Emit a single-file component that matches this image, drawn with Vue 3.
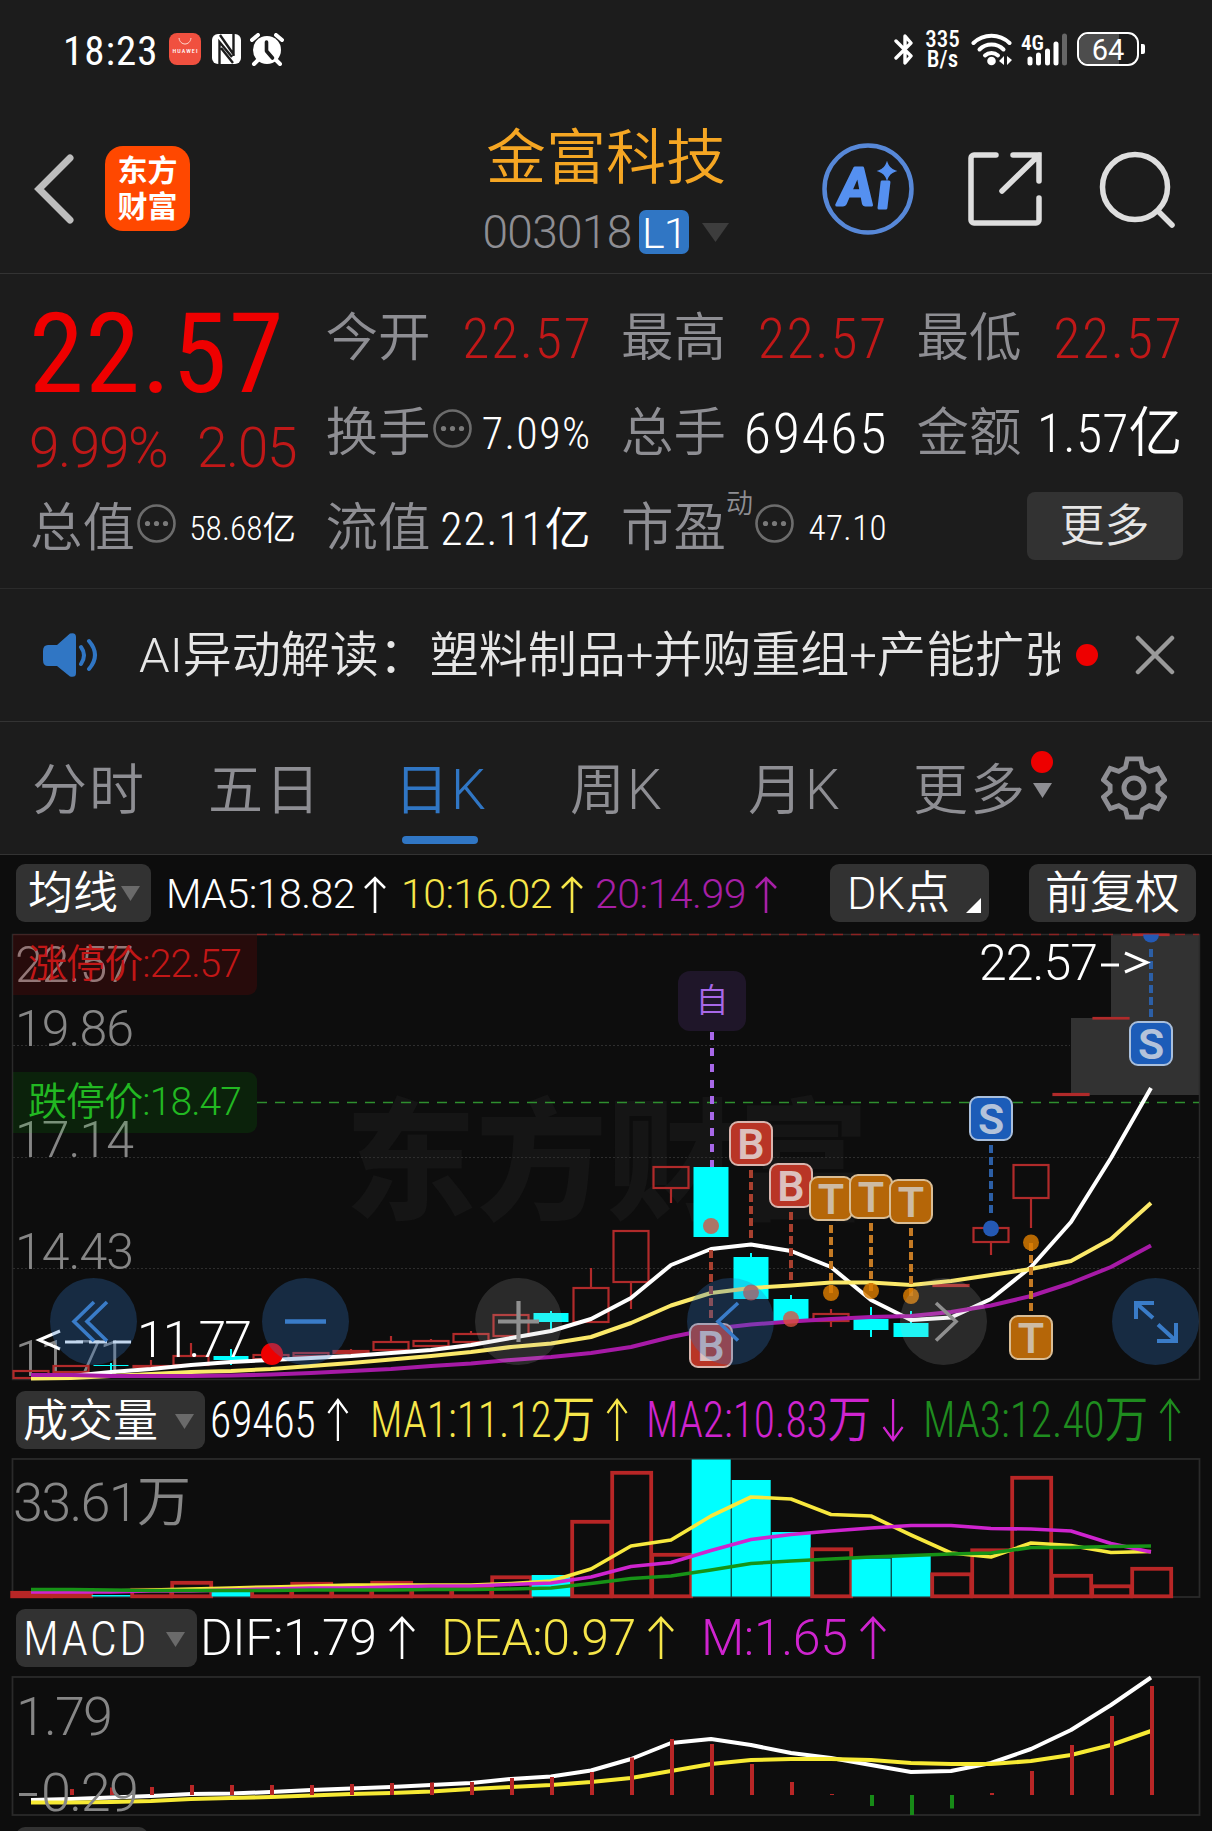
<template>
  <div class="page">
    <!-- Status bar -->
    <div class="status-bar">
      <span class="clock">18:23</span>
      <svg class="huawei" width="32" height="32" viewBox="0 0 32 32">
        <rect width="32" height="32" rx="8" fill="#f0503f" />
        <path d="M10 5c1 8 11 8 12 0" fill="none" stroke="#ffd9cf" stroke-width="1" />
        <text x="3.5" y="20" textLength="25" class="huawei-text">HUAWEI</text>
      </svg>
      <svg class="nfc" width="29" height="30" viewBox="0 0 29 30">
        <rect width="29" height="30" rx="6" fill="#fff" />
        <path d="M7.5 30V8L20 23M8 1l14 20M21.5 0v22M9 14l12 15" fill="none" stroke="#1c1c1c" stroke-width="2.4" />
      </svg>
      <svg class="alarm" width="34" height="33" viewBox="0 0 34 33">
        <circle cx="17" cy="17" r="14" fill="#fff" />
        <path d="M2 7l6-5M32 7l-6-5M8 27l-4 4M26 27l4 4" stroke="#fff" stroke-width="4" stroke-linecap="round" />
        <path d="M16.5 9v9l6 7" fill="none" stroke="#1c1c1c" stroke-width="3.6" stroke-linecap="round" stroke-linejoin="round" />
      </svg>
      <span class="spacer" />
      <svg class="bluetooth" width="21" height="33" viewBox="0 0 21 33">
        <path d="M2 8l15 15-6 7V3l6 7L2 25" fill="none" stroke="#fff" stroke-width="3.4" stroke-linejoin="round" stroke-linecap="round" />
      </svg>
      <span class="net-speed"><span>335</span><span>B/s</span></span>
      <svg class="wifi" width="42" height="33" viewBox="0 0 42 33">
        <g fill="none" stroke="#fff" stroke-width="4" stroke-linecap="round">
          <path d="M2.5 10a26 26 0 0 1 36 0" />
          <path d="M8.500 16.500a17 17 0 0 1 24 0" />
          <path d="M14 22.500a9.500 9.500 0 0 1 13 0" />
        </g>
        <circle cx="20.500" cy="28" r="4.300" fill="#fff" />
        <path d="M33 23v9l-5-4zM36 32v-9l5 4z" fill="#fff" />
      </svg>
      <svg class="signal" width="47" height="33" viewBox="0 0 47 33">
        <text x="0" y="17" textLength="23" lengthAdjust="spacingAndGlyphs" class="signal-text">4G</text>
        <g stroke="#fff" stroke-width="5" stroke-linecap="round">
          <path d="M9 26v4M17.500 22v8M26.500 18v12M35 11v19" />
          <path d="M43.500 3v27" stroke="#666" />
        </g>
      </svg>
      <span class="battery"><span class="battery-level" />
        <span class="battery-text">64</span>
      </span>
      <span class="battery-nub" />
    </div>

    <!-- Header -->
    <header class="header">
      <div class="header-left">
        <svg width="40" height="70" viewBox="0 0 40 70">
          <path d="M36 4L5 35l31 31" fill="none" stroke="#bdbdbd" stroke-width="7" stroke-linecap="round" />
        </svg>
        <div class="logo"><span>东方</span><span>财富</span></div>
      </div>
      <div class="header-title">
        <h1>金富科技</h1>
        <div class="code">
          <span>003018</span>
          <span class="level">L1</span>
          <svg width="27" height="19" viewBox="0 0 27 19"><path d="M0 0h27L13.500 19z" fill="#3d3d3d" /></svg>
        </div>
      </div>
      <div class="header-right">
        <svg width="92" height="92" viewBox="0 0 92 92">
          <circle cx="46" cy="46" r="43.500" fill="none" stroke="#5788d8" stroke-width="4.500" />
          <text x="17" y="62" class="ai-text">A</text>
          <text x="56" y="65" class="ai-text ai-i">ı</text>
          <path d="M65 20q2 6 8 8-6 2-8 8-2-6-8-8 6-2 8-8z" fill="#5590f0" stroke="#5590f0" stroke-width="1.500" />
        </svg>
        <svg class="share" width="74" height="74" viewBox="0 0 74 74">
          <path d="M28 3H6a3 3 0 0 0-3 3v62a3 3 0 0 0 3 3h62a3 3 0 0 0 3-3V46M45 3h26v26M71 3L34 39" fill="none" stroke="#dedede" stroke-width="5.500" stroke-linecap="round" />
        </svg>
        <svg class="search" width="76" height="78" viewBox="0 0 76 78">
          <circle cx="36" cy="37" r="32.500" fill="none" stroke="#dedede" stroke-width="5.500" />
          <path d="M59 61l14 14" stroke="#dedede" stroke-width="5.500" stroke-linecap="round" />
        </svg>
      </div>
    </header>

    <!-- Quote -->
    <section class="quote">
      <div class="price-box">
        <div class="price">22.57</div>
        <div class="change"><span>9.99%</span><span>2.05</span></div>
      </div>
      <div v-for="q in quotes" :key="q.label" class="quote-item">
        <span class="label">{{ q.label }}</span>
        <sup v-if="q.sup" class="sup">{{ q.sup }}</sup>
        <svg v-if="q.info" class="info" width="39" height="39" viewBox="0 0 39 39">
          <circle cx="19.500" cy="19.500" r="18" fill="none" stroke="#6c6c6c" stroke-width="2.600" />
          <g fill="#7a7a7a"><circle cx="10.500" cy="19.500" r="2.600" /><circle cx="19.500" cy="19.500" r="2.600" /><circle cx="28.500" cy="19.500" r="2.600" /></g>
        </svg>
        <span class="value" :class="q.cls">{{ q.value }}</span>
      </div>
      <button class="more-btn">更多</button>
    </section>

    <!-- News -->
    <section class="news">
      <svg class="speaker" width="56" height="46" viewBox="0 0 56 46">
        <path d="M5 13h9L27 1.500Q33 0 33 5v36q0 5-6 3.500L14 34H5q-5 0-5-6V19q0-6 5-6z" fill="#3076c4" />
        <path d="M38 15q6 8 0 17M46 9q12 14 0 28" fill="none" stroke="#3076c4" stroke-width="4" stroke-linecap="round" />
      </svg>
      <div class="news-text">AI异动解读： 塑料制品+并购重组+产能扩张</div>
      <span class="red-dot" />
      <svg class="close" width="40" height="40" viewBox="0 0 40 40">
        <path d="M3 3l34 34M37 3L3 37" stroke="#9a9a9a" stroke-width="4.500" stroke-linecap="round" />
      </svg>
    </section>

    <!-- Tabs -->
    <nav class="tabs">
      <span v-for="t in tabs" :key="t" class="tab" :class="{ active: t === '日K' }">{{ t }}</span>
      <span class="tab tab-more">更多
        <svg width="19" height="15" viewBox="0 0 19 15"><path d="M0 0h19L9.500 15z" fill="#8e8e93" /></svg>
        <span class="red-dot badge" />
      </span>
      <svg class="gear" width="66" height="66" viewBox="0 0 66 66">
        <path d="M26 3h14l2 9 7 4 9-3 7 12-7 6v6l7 6-7 12-9-3-7 4-2 8H26l-2-8-7-4-9 3-7-12 7-6v-6l-7-6 7-12 9 3 7-4z" transform="translate(1.500 1) scale(.955)" fill="none" stroke="#8e8e93" stroke-width="5" />
        <circle cx="33" cy="33" r="10" fill="none" stroke="#8e8e93" stroke-width="5" />
      </svg>
    </nav>

    <div class="charts">
      <!-- K line -->
      <div class="bar ma-bar">
        <button class="chip ma-chip">均线<svg width="19" height="15" viewBox="0 0 19 15"><path d="M0 0h19L9.500 15z" fill="#6a6a6a" /></svg></button>
        <span v-for="r in maReadouts" :key="r.text" class="readout" :class="r.cls">{{ r.text }}
          <svg class="arrow" viewBox="0 0 22 38"><path d="M11 37V2M1 12L11 2l10 10" /></svg>
        </span>
        <button class="chip dk-chip">DK点<svg width="15" height="15" viewBox="0 0 15 15"><path d="M15 0v15H0z" fill="#fff" /></svg></button>
        <button class="chip fq-chip">前复权</button>
      </div>

      <svg class="chart k-chart" viewBox="0 928 1212 458">
        <text x="345" y="1209" textLength="524" class="watermark">东方财富</text>
        <rect x="1111" y="934" width="88" height="84" fill="#323232" />
        <rect x="1071" y="1018" width="128" height="77" fill="#323232" />
        <g stroke="#2e2e2e" stroke-width="1" stroke-dasharray="2 2">
          <path d="M13 1045.500H1070M13 1157.500H1199M13 1268.500H1199" />
        </g>
        <rect x="12.500" y="934.500" width="1187" height="445" fill="none" stroke="#2a2a2a" stroke-width="1.500" />

        <g class="axis">
          <text x="15" y="982" textLength="119">22.57</text>
          <text x="15" y="1046" textLength="119">19.86</text>
          <text x="15" y="1157" textLength="119">17.14</text>
          <text x="15" y="1269" textLength="119">14.43</text>
          <text x="15" y="1376" textLength="112">11.71</text>
        </g>
        <path d="M13 934h244v52a9 9 0 0 1-9 9H13z" fill="#f00" fill-opacity=".11" />
        <path d="M13 1072h235a9 9 0 0 1 9 9v43a9 9 0 0 1-9 9H13z" fill="#0f0" fill-opacity=".09" />
        <text x="28" y="977" textLength="214" class="limit" fill="#c31717">涨停价:22.57</text>
        <text x="28" y="1115" textLength="214" class="limit" fill="#22b822">跌停价:18.47</text>
        <path d="M257 934.500H1199" stroke="#8c2222" stroke-width="1.300" stroke-dasharray="10 8" />
        <path d="M257 1102.500H1199" stroke="#2f8f2f" stroke-width="1.300" stroke-dasharray="10 8" />

        <g v-for="(c, i) in candles" :key="i">
          <template v-if="c.up">
            <path :d="wicks(c, i)" stroke="#b02a2a" stroke-width="2.200" />
            <rect :x="cx(i) - 17.500" :y="c.top" width="35" :height="c.bottom - c.top" fill="none" stroke="#b02a2a" stroke-width="2.200" />
          </template>
          <template v-else>
            <path :d="`M${cx(i)} ${c.high}V${c.low}`" stroke="#00ffff" stroke-width="2" />
            <rect :x="cx(i) - 17.500" :y="c.top" width="35" :height="c.bottom - c.top" fill="#00ffff" />
          </template>
        </g>

        <g fill="none" stroke-width="4" stroke-linejoin="round">
          <polyline :points="line(ma5, 1)" stroke="#fff" />
          <polyline :points="line(ma10)" stroke="#fbe96a" />
          <polyline :points="line(ma20)" stroke="#a61aa6" />
        </g>

        <rect x="678" y="971" width="68" height="60" rx="12" fill="#1f1629" />
        <text x="712" y="1012" class="self-mark">自</text>
        <path d="M712 1032V1167" stroke="#a868e8" stroke-width="4" stroke-dasharray="8 8" />

        <g v-for="(m, i) in marks" :key="'m' + i" :class="'mark-' + m.type">
          <path :d="`M${m.x} ${m.from}V${m.to}`" class="mark-line" />
          <circle v-if="m.dot > 940" :cx="m.x" :cy="m.dot" r="8" class="mark-dot" />
          <path v-else :d="`M${m.x - 8} 934.500a8 8 0 0 0 16 0z`" class="mark-dot" />
          <rect :x="m.x - 21" :y="m.y - 21.500" width="42" height="43" rx="8" class="mark-box" />
          <text :x="m.x" :y="m.y + 15" class="mark-text">{{ m.type }}</text>
        </g>

        <text x="979" y="980" textLength="119" class="extreme">22.57</text>
        <path d="M1101 965h18M1125 953l22 9.500-22 9.500" class="extreme-arrow" />
        <text x="137" y="1357" textLength="115" class="extreme">11.77</text>
        <path d="M60 1331l-21 9 21 9M65 1342h18M89 1342h18M113 1342h18" class="extreme-arrow" />
        <circle cx="272" cy="1354" r="11" fill="#ee0000" />

        <circle v-for="b in tools" :key="b.x" :cx="b.x" cy="1321.500" r="43.500" :class="b.gray ? 'tool-gray' : 'tool-blue'" />
        <g fill="none" stroke="#3a7cc8" stroke-width="3.600">
          <path d="M94 1302l-20 19.500 20 19.500M107 1302l-20 19.500 20 19.500" />
          <path d="M285 1321.500h41" stroke-width="4.500" />
          <path d="M738 1303l-20 18.500 20 19" />
          <path d="M1154 1303h-18v16M1136 1303l17 15M1157 1341h19v-18M1176 1341l-18-16.500" stroke-width="4" />
        </g>
        <g fill="none" stroke="#8f8f8f" stroke-width="3.600">
          <path d="M498 1321.500h41M518.500 1301v41" stroke-width="4.200" />
          <path d="M936 1303l20 18.500-20 19" />
        </g>
      </svg>

      <!-- Volume -->
      <div class="bar vol-bar">
        <button class="chip vol-chip">成交量<svg width="19" height="15" viewBox="0 0 19 15"><path d="M0 0h19L9.500 15z" fill="#6a6a6a" /></svg></button>
        <span v-for="r in volReadouts" :key="r.text" class="readout" :class="r.cls">{{ r.text }}
          <svg class="arrow" :class="{ down: r.down }" viewBox="0 0 24 44"><path d="M12 43V2M1 15L12 2l11 13" /></svg>
        </span>
      </div>

      <svg class="chart vol-chart" viewBox="0 1454 1212 150">
        <rect x="12.500" y="1459" width="1187" height="138" fill="none" stroke="#2a2a2a" stroke-width="1.800" />
        <text x="13" y="1521" textLength="178" class="axis-big">33.61万</text>
        <template v-for="(v, i) in volumes" :key="i">
          <rect v-if="candles[i].up" :x="cx(i) - 18.800" :y="v + 1.800" width="39" :height="1594.500 - v" fill="none" stroke="#b82626" stroke-width="3.800" />
          <rect v-else :x="cx(i) - 19.300" :y="v" width="39" :height="1596.500 - v" fill="#00ffff" />
        </template>
        <g fill="none" stroke-width="3.600" stroke-linejoin="round">
          <polyline :points="line(vol5)" stroke="#f7e83e" />
          <polyline :points="line(vol10)" stroke="#cf24cf" />
          <polyline :points="line(vol20)" stroke="#179317" />
        </g>
      </svg>

      <!-- MACD -->
      <div class="bar macd-bar">
        <button class="chip macd-chip">MACD<svg width="19" height="15" viewBox="0 0 19 15"><path d="M0 0h19L9.500 15z" fill="#6a6a6a" /></svg></button>
        <span v-for="r in macdReadouts" :key="r.text" class="readout" :class="r.cls">{{ r.text }}
          <svg class="arrow" viewBox="0 0 26 44"><path d="M13 43V2M1 15L13 2l12 13" /></svg>
        </span>
      </div>

      <svg class="chart macd-chart" viewBox="0 1672 1212 150">
        <rect x="12.500" y="1677" width="1187" height="138" fill="none" stroke="#2a2a2a" stroke-width="1.800" />
        <text x="16" y="1735" textLength="97" class="axis-big">1.79</text>
        <g fill="none" stroke-width="4" stroke-linejoin="round">
          <polyline :points="line(dif)" stroke="#fff" />
          <polyline :points="line(dea)" stroke="#f7ea34" />
        </g>
        <path v-for="(h, i) in hist" :key="i" :d="`M${cx(i) + 1} 1795V${h}`" :stroke="h > 1795 ? '#178a17' : '#b82626'" stroke-width="4" />
        <path d="M19 1794.500h18" stroke="#868686" stroke-width="3" />
        <text x="41" y="1811" textLength="98" class="axis-big">0.29</text>
      </svg>
      <div class="next-chip" />
    </div>
  </div>
</template>

<script setup>
const quotes = [
  { label: '今开', value: '22.57', cls: 'red' },
  { label: '最高', value: '22.57', cls: 'red' },
  { label: '最低', value: '22.57', cls: 'red' },
  { label: '换手', value: '7.09%', cls: 'size-43', info: true },
  { label: '总手', value: '69465', cls: 'size-56' },
  { label: '金额', value: '1.57亿', cls: 'size-54' },
  { label: '总值', value: '58.68亿', cls: 'size-34', info: true },
  { label: '流值', value: '22.11亿', cls: 'size-46' },
  { label: '市盈', value: '47.10', cls: 'size-35', info: true, sup: '动' }
]

const tabs = ['分时', '五日', '日K', '周K', '月K']

const maReadouts = [
  { text: 'MA5:18.82', cls: 'white' },
  { text: '10:16.02', cls: 'yellow' },
  { text: '20:14.99', cls: 'purple' }
]
const volReadouts = [
  { text: '69465', cls: 'white' },
  { text: 'MA1:11.12万', cls: 'yellow' },
  { text: 'MA2:10.83万', cls: 'magenta', down: true },
  { text: 'MA3:12.40万', cls: 'green' }
]
const macdReadouts = [
  { text: 'DIF:1.79', cls: 'white' },
  { text: 'DEA:0.97', cls: 'yellow' },
  { text: 'M:1.65', cls: 'magenta' }
]

// [up, top, bottom, high, low]
const candles = [
  [1, 1371, 1378, 1371, 1378],
  [1, 1366, 1372, 1366, 1372],
  [0, 1365, 1366, 1363, 1372],
  [1, 1366, 1367, 1360, 1367],
  [1, 1356, 1365, 1343, 1365],
  [0, 1356, 1360, 1349, 1365],
  [1, 1355, 1359, 1355, 1359],
  [1, 1353, 1356, 1352, 1356],
  [1, 1351, 1353, 1349, 1353],
  [1, 1342, 1350, 1336, 1350],
  [1, 1341, 1346, 1339, 1346],
  [1, 1334, 1342, 1331, 1342],
  [1, 1315, 1336, 1315, 1336],
  [0, 1313, 1322, 1311, 1332],
  [1, 1288, 1322, 1268, 1322],
  [1, 1231, 1282, 1231, 1309],
  [1, 1167, 1188, 1167, 1203],
  [0, 1167, 1237, 1167, 1237],
  [0, 1257, 1299, 1253, 1299],
  [0, 1299, 1321, 1295, 1321],
  [1, 1314, 1321, 1309, 1327],
  [0, 1319, 1330, 1307, 1337],
  [0, 1323, 1337, 1311, 1337],
  [1, 1285, 1286, 1285, 1286],
  [1, 1228, 1242, 1228, 1255],
  [1, 1165, 1198, 1165, 1228],
  [1, 1094, 1095, 1094, 1095],
  [1, 1018, 1018.5, 1018, 1018.5],
  [1, 934.5, 935, 934.5, 935]
].map(([up, top, bottom, high, low]) => ({ up, top, bottom, high, low }))

const ma5 = [1376, 1372, 1369, 1365, 1362, 1360, 1358, 1356, 1353, 1350, 1345, 1338, 1331, 1319, 1298, 1265, 1249, 1244.5, 1251, 1267, 1300, 1320, 1317.5, 1299, 1267, 1222, 1158, 1088]
const ma10 = [1378.5, 1378, 1376, 1374, 1372, 1371, 1369, 1366, 1363, 1359.5, 1356, 1352, 1347, 1343.5, 1337, 1323, 1305.5, 1293, 1288, 1285.5, 1282.5, 1282.5, 1285, 1281, 1275, 1269, 1261, 1239, 1203]
const ma20 = [1375, 1375, 1376, 1376, 1376, 1375.5, 1374.5, 1373, 1371, 1369, 1366, 1363.5, 1360, 1357, 1353, 1347, 1337, 1329, 1324.5, 1321.5, 1319, 1317, 1316, 1312, 1305.5, 1296, 1283, 1267, 1245.5]

const volumes = [1591, 1593, 1595, 1588, 1581, 1591, 1588, 1582, 1587, 1581, 1587, 1587, 1575.5, 1575, 1520, 1471, 1553, 1459.5, 1480, 1532, 1547.5, 1558.5, 1556, 1572.5, 1548.5, 1476, 1574, 1584.5, 1567]
const vol5 = [1590, 1591, 1591, 1590, 1589, 1588, 1587, 1586, 1585, 1585, 1585, 1585, 1583.5, 1581, 1569, 1546, 1540, 1516, 1497, 1499, 1514.5, 1516, 1535, 1553, 1557, 1543, 1545.5, 1552.5, 1551.5]
const vol10 = [1592, 1592, 1592, 1591, 1591, 1590, 1589, 1588, 1588, 1587, 1586, 1586, 1584.5, 1583, 1577, 1566.5, 1562.5, 1550.5, 1539.5, 1534.5, 1531, 1528, 1525.5, 1525.5, 1528.5, 1529, 1531, 1543.5, 1552]
const vol20 = [1589.5, 1589.5, 1590, 1590.5, 1590.5, 1590.5, 1590.5, 1590, 1590, 1590, 1589.5, 1589.5, 1589, 1588, 1583.5, 1578.5, 1576, 1570, 1563.5, 1561, 1559, 1557, 1555.5, 1554, 1553, 1547.5, 1547.5, 1546.5, 1546]

const dif = [1800, 1799, 1797.5, 1796, 1794, 1793.5, 1792, 1790, 1788.5, 1787, 1785, 1783, 1779, 1776.5, 1770.5, 1759, 1743, 1739, 1745, 1753, 1758, 1765, 1772, 1771, 1763, 1749, 1730, 1705, 1677.5]
const dea = [1802.5, 1802.5, 1802, 1801, 1799, 1798, 1797, 1795.5, 1794, 1793, 1791.5, 1789, 1787, 1785, 1782, 1778, 1771, 1764, 1760, 1759, 1759, 1760, 1763, 1764, 1764, 1761, 1755, 1745, 1731]
const hist = [1793, 1789, 1787.5, 1787, 1785, 1785, 1785, 1785, 1784, 1783, 1782.5, 1782, 1778, 1777, 1772, 1757.5, 1739, 1744, 1764, 1782, 1794, 1806, 1815, 1808.5, 1793, 1771, 1745, 1716, 1686]

const marks = [
  { type: 'B', x: 751, y: 1143.5, from: 1170, to: 1240, dot: 1292.5 },
  { type: 'B', x: 791, y: 1185.5, from: 1212, to: 1281, dot: 1319 },
  { type: 'B', x: 711, y: 1345.5, from: 1250, to: 1320, dot: 1226 },
  { type: 'T', x: 831, y: 1198.5, from: 1225, to: 1293, dot: 1293 },
  { type: 'T', x: 871, y: 1196.5, from: 1223, to: 1291, dot: 1291 },
  { type: 'T', x: 911, y: 1201.5, from: 1228, to: 1296, dot: 1296 },
  { type: 'S', x: 991, y: 1118.5, from: 1145, to: 1214, dot: 1228.5 },
  { type: 'S', x: 1151, y: 1043.5, from: 949, to: 1018, dot: 934 },
  { type: 'T', x: 1031, y: 1337.5, from: 1243, to: 1312, dot: 1242.5 }
]

const tools = [
  { x: 93.5 },
  { x: 305.5 },
  { x: 518.5, gray: true },
  { x: 730.5 },
  { x: 943.5, gray: true },
  { x: 1155.5 }
]

const cx = (i) => 31 + i * 40

const line = (values, start = 0) => values.map((y, i) => `${cx(i + start)},${y}`).join(' ')

const wicks = (c, i) => `M${cx(i)} ${c.high}V${c.top}M${cx(i)} ${c.bottom}V${c.low}`
</script>

<style>
body {
  background: #1c1c1c;
}
</style>

<style scoped>
.page {
  width: 1212px;
  height: 1831px;
  overflow: hidden;
  background: #1c1c1c;
  color: #fff;
  font-family: Roboto, 'Noto Sans CJK SC', sans-serif;
  font-weight: 330;
  font-stretch: 87.5%;
  line-height: 1;
}

svg {
  display: block;
  flex: none;
}

button {
  border: none;
  padding: 0;
  color: #fff;
  font: inherit;
  cursor: pointer;
}

/* Status bar */
.status-bar {
  display: flex;
  align-items: center;
  height: 98px;
  padding: 0 69px 0 63px;
}

.clock {
  width: 106px;
  font-size: 41px;
  font-weight: 400;
  line-height: 44px;
  letter-spacing: 1px;
  padding-top: 3px;
}

.huawei-text {
  font-size: 6px;
  font-weight: 500;
  fill: #fff;
}

.nfc {
  margin-left: 11px;
}

.alarm {
  margin-left: 9px;
}

.spacer {
  flex: 1;
}

.net-speed {
  display: flex;
  flex-direction: column;
  align-items: center;
  margin-left: 9px;
  width: 37px;
  font-size: 23px;
  font-weight: 500;
  line-height: 20px;
  padding-top: 2px;
}

.wifi {
  margin-left: 10px;
}

.signal {
  margin-left: 8px;
}

.signal-text {
  font-size: 21px;
  font-weight: 600;
  fill: #fff;
}

.battery {
  position: relative;
  box-sizing: border-box;
  width: 62px;
  height: 34px;
  margin-left: 9px;
  border: 2px solid #fff;
  border-radius: 11px;
  overflow: hidden;
  text-align: center;
}

.battery-level {
  position: absolute;
  inset: 0 18px 0 0;
  background: #4d4d4d;
}

.battery-text {
  position: relative;
  font-size: 29px;
  font-weight: 400;
  font-stretch: 100%;
  line-height: 32px;
}

.battery-nub {
  width: 4px;
  height: 10px;
  margin-left: 2px;
  margin-right: -2px;
  border-radius: 0 2px 2px 0;
  background: #fff;
}

/* Header */
.header {
  display: grid;
  grid-template-columns: 1fr auto 1fr;
  align-items: center;
  height: 175px;
  padding: 0 37px 0 34px;
  border-bottom: 1px solid #333;
}

.header-left {
  display: flex;
  align-items: center;
  gap: 31px;
  padding-top: 6px;
}

.logo {
  display: flex;
  flex-direction: column;
  align-items: center;
  justify-content: center;
  width: 85px;
  height: 85px;
  border-radius: 18px;
  background: #ff4800;
  font-size: 30px;
  font-weight: 700;
  line-height: 36px;
}

.header-title {
  padding: 17px 0 0 3px;
}

h1 {
  margin: 0;
  font-size: 60px;
  font-weight: 330;
  line-height: 76px;
  text-align: center;
  color: #f5a623;
}

.code {
  display: flex;
  align-items: center;
  height: 70px;
  font-size: 46px;
  font-stretch: 100%;
  letter-spacing: -0.7px;
  color: #8e8e93;
}

.level {
  width: 50px;
  height: 44px;
  margin: 0 13px 0 8px;
  border-radius: 7px;
  background: #3076c4;
  color: #fff;
  font-size: 43px;
  line-height: 46px;
  text-align: center;
}

.header-right {
  display: flex;
  align-items: center;
  justify-content: flex-end;
  padding-top: 6px;
}

.ai-text {
  font-family: Lato, sans-serif;
  font-size: 52px;
  font-weight: 900;
  font-style: italic;
  fill: #5590f0;
  stroke: #5590f0;
  stroke-width: 3;
  stroke-linejoin: round;
}

.ai-i {
  font-size: 50px;
}

.share {
  margin: 0 57px 0 54px;
}

/* Quote */
.quote {
  display: grid;
  grid-template-columns: repeat(4, 264px);
  grid-template-rows: repeat(3, 95px);
  column-gap: 31.5px;
  height: 315px;
  box-sizing: border-box;
  padding: 17px 32px 0;
  border-bottom: 1px solid #2b2b2b;
}

.price-box {
  grid-row: 1 / 3;
}

.price {
  height: 126px;
  margin: -1px 0 0 -3px;
  font-size: 111px;
  font-weight: 400;
  line-height: 129px;
  letter-spacing: 1.5px;
  color: #ee0000;
}

.change {
  display: flex;
  justify-content: space-between;
  margin-left: -3px;
  font-size: 55px;
  font-stretch: 100%;
  line-height: 64px;
  letter-spacing: -1.4px;
  color: #c01818;
}

.quote-item {
  display: flex;
  align-items: center;
  white-space: nowrap;
}

.label {
  margin-left: -2px;
  font-size: 52.500px;
  color: #8e8e93;
}

.value {
  margin-left: auto;
}

.red {
  margin-right: -1px;
  font-size: 56px;
  letter-spacing: 1.6px;
  color: #c01818;
}

.size-56 {
  margin-right: -1px;
  font-size: 56px;
  letter-spacing: 1.6px;
}

.size-54 {
  font-size: 54px;
}

.size-46 {
  font-size: 46px;
  letter-spacing: 0.8px;
}

.size-43 {
  font-size: 44px;
  letter-spacing: 1.4px;
}

.size-35 {
  font-size: 35px;
  letter-spacing: 0.4px;
}

.size-34 {
  font-size: 33.5px;
}

.info {
  margin: -10px 0 0 2px;
}

.sup {
  align-self: flex-start;
  margin: 10px 0 0;
  font-size: 27px;
  color: #8e8e93;
}

.quote-item:nth-child(7) {
  grid-column: 4;
}

.more-btn {
  justify-self: end;
  align-self: center;
  width: 156px;
  height: 68px;
  margin-top: -6px;
  padding-top: 1px;
  border-radius: 8px;
  background: #323232;
  color: #e6e6e6;
  font-size: 45px;
}

/* News */
.news {
  display: flex;
  align-items: center;
  height: 133px;
  box-sizing: border-box;
  padding: 0 37px 0 43px;
  border-bottom: 1px solid #333;
}

.news-text {
  width: 921px;
  margin-left: 40px;
  padding-top: 2px;
  overflow: hidden;
  white-space: nowrap;
  font-size: 49px;
  font-stretch: 100%;
  line-height: 64px;
  word-spacing: -10px;
  color: #e6e6e6;
}

.red-dot {
  width: 22px;
  height: 22px;
  margin-left: 16px;
  border-radius: 50%;
  background: #ee0000;
}

.close {
  margin-left: auto;
}

/* Tabs */
.tabs {
  display: grid;
  grid-template-columns: 176px 186px 176px 178px 165px auto 1fr;
  align-items: center;
  height: 133px;
  box-sizing: border-box;
  padding: 0 45px 0 32px;
  border-bottom: 1px solid #333;
}

.tab {
  position: relative;
  padding-top: 5px;
  font-size: 55px;
  font-stretch: 100%;
  letter-spacing: 2px;
  line-height: 127px;
  color: #8e8e93;
  white-space: nowrap;
}

.tab.active {
  color: #3076c4;
}

.tab.active::after {
  content: '';
  position: absolute;
  left: 8px;
  bottom: 10px;
  width: 76px;
  height: 8px;
  border-radius: 4px;
  background: #3076c4;
}

.tab-more {
  display: flex;
  align-items: center;
  gap: 6px;
}

.badge {
  position: absolute;
  right: -1px;
  top: 29px;
}

.gear {
  justify-self: end;
}

/* Charts */
.charts {
  height: 976px;
  background: #0d0d0d;
}

.bar {
  display: grid;
  align-items: center;
  box-sizing: border-box;
  padding-left: 16px;
}

.chip {
  display: flex;
  align-items: center;
  box-sizing: border-box;
  height: 58px;
  padding-top: 2px;
  border-radius: 9px;
  background: #323232;
  font-size: 45px;
}

.readout {
  display: flex;
  align-items: center;
  white-space: nowrap;
}

.arrow {
  fill: none;
  stroke: currentColor;
  stroke-width: 2.6;
}

.arrow.down {
  transform: rotate(180deg);
}

.white {
  color: #fff;
}

.yellow {
  color: #f6e64a;
}

.purple {
  color: #a61fa6;
}

.magenta {
  color: #cf24cf;
}

.green {
  color: #1f8c1f;
}

.ma-bar {
  grid-template-columns: 150px 235px 194px 235px 199px 167px;
  height: 73px;
  padding-top: 2px;
}

.ma-chip {
  width: 135px;
  padding-left: 12px;
  gap: 3px;
}

.ma-bar .readout {
  padding-top: 4px;
  font-size: 41px;
  font-stretch: 100%;
  letter-spacing: -0.5px;
}

.ma-bar .arrow {
  width: 22px;
  height: 38px;
  margin-left: 9px;
}

.dk-chip {
  width: 159px;
  padding-left: 17px;
  font-stretch: 100%;
}

.dk-chip svg {
  margin: 24px 8px 0 auto;
}

.fq-chip {
  width: 167px;
  justify-content: center;
}

.chart {
  width: 1212px;
}

.k-chart {
  height: 458px;
}

.vol-bar,
.macd-bar {
  height: 68px;
}

.vol-bar {
  grid-template-columns: 194px 160px 276px 277px auto;
}

.vol-bar .readout {
  font-size: 50px;
  font-stretch: 75%;
  transform: scaleX(0.87);
  transform-origin: left center;
}

.vol-bar .arrow {
  width: 26px;
  height: 44px;
  margin-left: 12px;
}

.vol-chip {
  width: 189px;
  padding-left: 7px;
  gap: 17px;
}

.vol-chart,
.macd-chart {
  height: 150px;
}

.macd-chip {
  width: 181px;
  padding-left: 7px;
  gap: 17px;
  font-size: 48px;
  letter-spacing: 2.2px;
}

.macd-bar {
  grid-template-columns: 184px 241px 260px auto;
}

.macd-bar .readout {
  font-size: 50px;
  font-stretch: 100%;
  letter-spacing: -0.4px;
}

.macd-bar .arrow {
  width: 26px;
  height: 44px;
  margin-left: 12px;
}

.next-chip {
  width: 132px;
  height: 40px;
  margin: 5px 0 0 16px;
  border-radius: 9px;
  background: #323232;
}

/* SVG text */
.watermark {
  font-size: 131px;
  font-weight: 900;
  fill: #151515;
}

.axis {
  font-size: 50px;
  font-stretch: 100%;
  fill: #868686;
}

.axis-big {
  font-size: 54px;
  font-stretch: 100%;
  fill: #868686;
}

.limit {
  font-size: 39px;
  font-stretch: 100%;
}

.extreme {
  font-size: 50px;
  font-stretch: 100%;
  fill: #fff;
}

.extreme-arrow {
  fill: none;
  stroke: #fff;
  stroke-width: 3;
}

.self-mark {
  font-size: 33px;
  text-anchor: middle;
  fill: #a868e8;
}

.mark-line {
  stroke-width: 4;
  stroke-dasharray: 8 4;
}

.mark-box {
  stroke-width: 2;
}

.mark-text {
  font-size: 43px;
  font-weight: 600;
  font-stretch: 100%;
  text-anchor: middle;
}

.mark-B .mark-line { stroke: #a8402f; }
.mark-B .mark-dot { fill: rgba(220, 80, 60, 0.78); }
.mark-B .mark-box { fill: #b93526; stroke: #d9b5ae; }
.mark-B .mark-text { fill: #dcc0bd; }
.mark-T .mark-line { stroke: #c47a24; }
.mark-T .mark-dot { fill: rgba(220, 125, 0, 0.82); }
.mark-T .mark-box { fill: #b56608; stroke: #d9bd95; }
.mark-T .mark-text { fill: #cdbba4; }
.mark-S .mark-line { stroke: #2c5fa6; }
.mark-S .mark-dot { fill: #2459b4; }
.mark-S .mark-box { fill: #1c5cb8; stroke: #a9bfdc; }
.mark-S .mark-text { fill: #b4c3da; }

.tool-blue {
  fill: rgba(49, 118, 196, 0.29);
}

.tool-gray {
  fill: rgba(190, 190, 190, 0.17);
}
</style>
